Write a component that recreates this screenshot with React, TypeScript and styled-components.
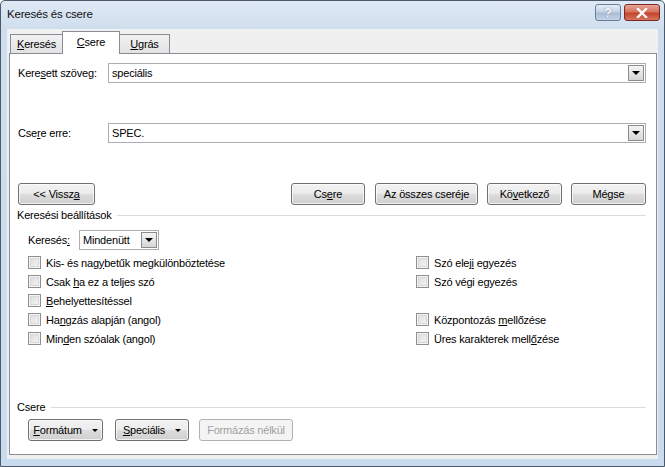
import React from "react";
import styled, { createGlobalStyle, css } from "styled-components";

const GlobalStyle = createGlobalStyle`
  html, body { margin: 0; padding: 0; }
  body {
    font-family: "Liberation Sans", Arial, sans-serif;
    font-size: 11px;
    letter-spacing: -0.2px;
    color: #000;
    background: #fff;
  }
  u { text-decoration: underline; text-underline-offset: 1px; }
`;

const Window = styled.div`
  box-sizing: border-box;
  width: 665px;
  height: 467px;
  display: flex;
  flex-direction: column;
  border: 1px solid #4a5a6c;
  border-radius: 5px 5px 0 0;
  background: linear-gradient(#dfe9f5 0px, #cfdeee 28px, #c9dbee 100%);
  overflow: hidden;
`;

const TitleBar = styled.div`
  height: 27px;
  display: flex;
  align-items: center;
  justify-content: space-between;
  padding: 0 4px 0 6px;
  flex-shrink: 0;
`;

const Title = styled.span`
  font-size: 11.5px;
  color: #111;
  margin-top: -2px;
`;

const CaptionButtons = styled.div`
  display: flex;
  gap: 3px;
  margin-top: -4px;
`;

const CaptionButton = styled.div<{ $close?: boolean }>`
  box-sizing: border-box;
  height: 17px;
  width: ${(p) => (p.$close ? "36px" : "26px")};
  border: 1px solid ${(p) => (p.$close ? "#7a2a22" : "#6d7f95")};
  border-radius: 3px;
  display: flex;
  align-items: center;
  justify-content: center;
  color: #fff;
  font-weight: bold;
  font-size: 13px;
  letter-spacing: 0;
  ${(p) =>
    p.$close
      ? css`
          background: linear-gradient(#e6a597 0%, #d6735e 45%, #c2442b 55%, #d5775e 100%);
        `
      : css`
          background: linear-gradient(#e4ecf5 0%, #c5d4e6 45%, #a9bdd6 55%, #c3d3e6 100%);
          text-shadow: 0 0 1px #3d5570;
        `}
`;

const Client = styled.div`
  flex: 1;
  margin: 1px 6px 7px 6px;
  background: #f0f0f0;
  display: flex;
  flex-direction: column;
  padding: 2px 1px 4px 2px;
`;

const TabStrip = styled.div`
  display: flex;
  align-items: flex-end;
  height: 23px;
  padding-left: 1px;
  position: relative;
  z-index: 1;
  margin-bottom: -1px;
`;

const Tab = styled.div<{ $selected?: boolean; $w: number }>`
  box-sizing: border-box;
  width: ${(p) => p.$w}px;
  height: ${(p) => (p.$selected ? "23px" : "20px")};
  border: 1px solid #898c95;
  border-bottom: ${(p) => (p.$selected ? "none" : "1px solid #898c95")};
  background: ${(p) => (p.$selected ? "#fff" : "linear-gradient(#f2f2f2, #e2e2e2)")};
  display: flex;
  align-items: center;
  justify-content: center;
  ${(p) =>
    p.$selected &&
    css`
      margin-left: -1px;
      margin-right: -1px;
      position: relative;
      z-index: 2;
      padding-bottom: 2px;
    `}
`;

const Panel = styled.div`
  flex: 1;
  box-sizing: border-box;
  background: #fff;
  border: 1px solid #898c95;
  padding: 9px 10px 0 8px;
  display: flex;
  flex-direction: column;
`;

const FieldRow = styled.div<{ $mt?: number }>`
  display: flex;
  align-items: center;
  margin-top: ${(p) => p.$mt ?? 0}px;
`;

const FieldLabel = styled.span<{ $w: number }>`
  width: ${(p) => p.$w}px;
  flex-shrink: 0;
`;

const Combo = styled.div<{ $w?: number }>`
  box-sizing: border-box;
  height: 20px;
  ${(p) => (p.$w ? `width: ${p.$w}px;` : "flex: 1;")}
  border: 1px solid #abadb3;
  background: #fff;
  display: flex;
  align-items: center;
  padding: 0 1px 0 3px;
`;

const ComboText = styled.span`
  flex: 1;
`;

const DropButton = styled.div`
  box-sizing: border-box;
  width: 16px;
  height: 16px;
  border: 1px solid #8c8c8c;
  background: linear-gradient(#f4f4f4, #d6d6d6);
  display: flex;
  align-items: center;
  justify-content: center;
`;

const Arrow = styled.span<{ $size?: number }>`
  width: 0;
  height: 0;
  border-left: ${(p) => p.$size ?? 4}px solid transparent;
  border-right: ${(p) => p.$size ?? 4}px solid transparent;
  border-top: ${(p) => p.$size ?? 4}px solid #000;
`;

const ButtonRow = styled.div<{ $mt: number }>`
  display: flex;
  align-items: center;
  margin-top: ${(p) => p.$mt}px;
`;

const Spacer = styled.div`
  flex: 1;
`;

const Button = styled.div<{ $w: number; $focused?: boolean; $disabled?: boolean; $ml?: number }>`
  box-sizing: border-box;
  width: ${(p) => p.$w}px;
  height: 22px;
  border-radius: 3px;
  border: 1px solid #707070;
  background: linear-gradient(#f2f2f2 0%, #ebebeb 50%, #dddddd 51%, #cfcfcf 100%);
  display: flex;
  align-items: center;
  justify-content: center;
  gap: 10px;
  margin-left: ${(p) => p.$ml ?? 0}px;
  box-shadow: inset 0 0 0 1px rgba(255, 255, 255, 0.7);
  ${(p) =>
    p.$focused &&
    css`
      border-color: #3c7fb1;
      background: linear-gradient(#f4f9fc 0%, #eaf3f9 50%, #dbe9f2 51%, #cfe1ee 100%);
      box-shadow: inset 0 0 0 1px #c3e3f4;
    `}
  ${(p) =>
    p.$disabled &&
    css`
      border-color: #adb2b5;
      background: #f4f4f4;
      color: #a0a0a0;
      box-shadow: none;
    `}
`;

const GroupHeader = styled.div<{ $mt: number }>`
  display: flex;
  align-items: center;
  gap: 6px;
  margin-top: ${(p) => p.$mt}px;
  margin-left: -1px;
  height: 14px;
  &::after {
    content: "";
    flex: 1;
    height: 1px;
    background: #dcdcdc;
  }
`;

const Indent = styled.div`
  padding-left: 10px;
  display: flex;
  flex-direction: column;
`;

const Options = styled.div`
  display: grid;
  grid-template-columns: 388px 1fr;
  margin-top: 3px;
`;

const Column = styled.div`
  display: flex;
  flex-direction: column;
`;

const CheckRow = styled.div`
  height: 19px;
  display: flex;
  align-items: center;
  gap: 5px;
`;

const EmptyRow = styled.div`
  height: 19px;
`;

const Box = styled.span`
  box-sizing: border-box;
  width: 13px;
  height: 13px;
  border: 1px solid #8f8f8f;
  box-shadow: inset 0 0 0 1px #f4f4f4, inset 0 0 0 2px #d8d8d8;
  background-image: linear-gradient(135deg, #dadada, #f8f8f8);
`;

const Check = ({ children }: { children: React.ReactNode }) => (
  <CheckRow>
    <Box />
    <span>{children}</span>
  </CheckRow>
);

export default function App() {
  return (
    <>
      <GlobalStyle />
      <Window>
        <TitleBar>
          <Title>Keresés és csere</Title>
          <CaptionButtons>
            <CaptionButton>?</CaptionButton>
            <CaptionButton $close>
              <svg width="12" height="10" viewBox="0 0 12 10">
                <path d="M2 1 L10 9 M10 1 L2 9" stroke="#fff" strokeWidth="2.4" strokeLinecap="square" />
              </svg>
            </CaptionButton>
          </CaptionButtons>
        </TitleBar>
        <Client>
          <TabStrip>
            <Tab $w={53}>
              <span><u>K</u>eresés</span>
            </Tab>
            <Tab $selected $w={58}>
              <span><u>C</u>sere</span>
            </Tab>
            <Tab $w={51}>
              <span><u>U</u>grás</span>
            </Tab>
          </TabStrip>
          <Panel>
            <FieldRow>
              <FieldLabel $w={90}>
                Kere<u>s</u>ett szöveg:
              </FieldLabel>
              <Combo>
                <ComboText>speciális</ComboText>
                <DropButton>
                  <Arrow />
                </DropButton>
              </Combo>
            </FieldRow>
            <FieldRow $mt={40}>
              <FieldLabel $w={90}>
                Cse<u>r</u>e erre:
              </FieldLabel>
              <Combo>
                <ComboText>SPEC.</ComboText>
                <DropButton>
                  <Arrow />
                </DropButton>
              </Combo>
            </FieldRow>
            <ButtonRow $mt={40}>
              <Button $w={77}>
                <span>&lt;&lt; Vissz<u>a</u></span>
              </Button>
              <Spacer />
              <Button $w={74}>
                <span>Cs<u>e</u>re</span>
              </Button>
              <Button $w={103} $ml={10}>
                <span>Az összes cseré<u>j</u>e</span>
              </Button>
              <Button $w={75} $ml={9}>
                <span>Kö<u>v</u>etkező</span>
              </Button>
              <Button $w={75} $ml={9}>
                <span>Mégse</span>
              </Button>
            </ButtonRow>
            <GroupHeader $mt={3}>Keresési beállítások</GroupHeader>
            <Indent>
              <FieldRow $mt={8}>
                <FieldLabel $w={51}>
                  Keresés<u>:</u>
                </FieldLabel>
                <Combo $w={80}>
                  <ComboText>Mindenütt</ComboText>
                  <DropButton>
                    <Arrow />
                  </DropButton>
                </Combo>
              </FieldRow>
              <Options>
                <Column>
                  <Check>
                    Kis- és nag<u>y</u>betűk megkülönböztetése
                  </Check>
                  <Check>
                    Csak <u>h</u>a ez a teljes szó
                  </Check>
                  <Check>
                    <u>B</u>ehelyettesítéssel
                  </Check>
                  <Check>
                    Ha<u>n</u>gzás alapján (angol)
                  </Check>
                  <Check>
                    Min<u>d</u>en szóalak (angol)
                  </Check>
                </Column>
                <Column>
                  <Check>
                    Szó elej<u>i</u> egyezés
                  </Check>
                  <Check>
                    Szó vé<u>g</u>i egyezés
                  </Check>
                  <EmptyRow />
                  <Check>
                    Központozás <u>m</u>ellőzése
                  </Check>
                  <Check>
                    Üres karakterek mell<u>ő</u>zése
                  </Check>
                </Column>
              </Options>
            </Indent>
            <GroupHeader $mt={52}>Csere</GroupHeader>
            <Indent>
              <ButtonRow $mt={5}>
                <Button $w={75}>
                  <span><u>F</u>ormátum</span>
                  <Arrow $size={3} />
                </Button>
                <Button $w={74} $ml={12}>
                  <span><u>S</u>peciális</span>
                  <Arrow $size={3} />
                </Button>
                <Button $w={94} $ml={10} $disabled>
                  <span>Formázás nélkül</span>
                </Button>
              </ButtonRow>
            </Indent>
          </Panel>
        </Client>
      </Window>
    </>
  );
}
